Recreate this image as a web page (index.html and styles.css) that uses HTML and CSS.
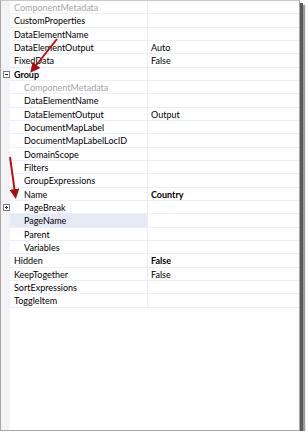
FILE: index.html
```html
<!DOCTYPE html>
<html lang="en">
<head>
  <meta charset="UTF-8" />
  <title>Properties</title>
  <link rel="stylesheet" href="styles.css">
</head>
<body>
  <div class="grid">
    <div class="row"><div class="name muted">ComponentMetadata</div><div class="value"></div></div>
    <div class="row"><div class="name">CustomProperties</div><div class="value"></div></div>
    <div class="row"><div class="name">DataElementName</div><div class="value"></div></div>
    <div class="row"><div class="name">DataElementOutput</div><div class="value">Auto</div></div>
    <div class="row"><div class="name">FixedData</div><div class="value">False</div></div>
    <div class="row"><span class="toggle minus"></span><div class="name bold">Group</div><div class="value"></div></div>
    <div class="row sub"><div class="name muted">ComponentMetadata</div><div class="value"></div></div>
    <div class="row sub"><div class="name">DataElementName</div><div class="value"></div></div>
    <div class="row sub"><div class="name">DataElementOutput</div><div class="value">Output</div></div>
    <div class="row sub"><div class="name">DocumentMapLabel</div><div class="value"></div></div>
    <div class="row sub"><div class="name">DocumentMapLabelLocID</div><div class="value"></div></div>
    <div class="row sub"><div class="name">DomainScope</div><div class="value"></div></div>
    <div class="row sub"><div class="name">Filters</div><div class="value"></div></div>
    <div class="row sub"><div class="name">GroupExpressions</div><div class="value"></div></div>
    <div class="row sub"><div class="name">Name</div><div class="value bold">Country</div></div>
    <div class="row sub"><span class="toggle plus"></span><div class="name">PageBreak</div><div class="value"></div></div>
    <div class="row sub selected"><div class="name">PageName</div><div class="value"></div></div>
    <div class="row sub"><div class="name">Parent</div><div class="value"></div></div>
    <div class="row sub"><div class="name">Variables</div><div class="value"></div></div>
    <div class="row"><div class="name">Hidden</div><div class="value bold">False</div></div>
    <div class="row"><div class="name">KeepTogether</div><div class="value">False</div></div>
    <div class="row"><div class="name">SortExpressions</div><div class="value"></div></div>
    <div class="row"><div class="name">ToggleItem</div><div class="value"></div></div>

    <!-- annotation arrows -->
    <svg class="arrows" width="300" height="220" viewBox="0 0 300 220">
      <defs>
        <marker id="head" markerWidth="5" markerHeight="5" refX="2" refY="2.5" orient="auto">
          <path d="M0,0 L5,2.5 L0,5 z" fill="#a80e0e"/>
        </marker>
      </defs>
      <line x1="56" y1="38" x2="33" y2="67" stroke="#b81414" stroke-width="2" marker-end="url(#head)"/>
      <line x1="9" y1="156" x2="14" y2="192" stroke="#b81414" stroke-width="2" marker-end="url(#head)"/>
    </svg>
  </div>
</body>
</html>
```
FILE: styles.css
```css
body {
  margin: 0;
  background: #fff;
  font-family: Lato, "Open Sans", sans-serif;
  font-size: 9px;
  color: #000;
}

.grid {
  position: relative;
  width: 300px;
  height: 431px;
  box-sizing: border-box;
  border: 1px solid #a8a8a8;
  border-top-color: #c8c8c8;
  box-shadow: 3px 3px 0 #5a5a5a, 5px 5px 1px #9a9a9a;
  padding-left: 9px;
  background-color: #fff;
  background-image: linear-gradient(#f3f3f6, #f3f3f6);
  background-size: 9px 100%;
  background-repeat: no-repeat;
}

.row {
  position: relative;
  display: flex;
  height: 13.33px;
  line-height: 13px;
  box-sizing: border-box;
  border-bottom: 1px solid #eceef8;
  background: #fff;
}

.name {
  width: 138px;
  box-sizing: border-box;
  padding-left: 4px;
  border-right: 1px solid #eceef8;
  white-space: nowrap;
  overflow: hidden;
}

.sub .name {
  padding-left: 14px;
}

.value {
  flex: 1;
  padding-left: 3px;
}

.muted {
  color: #a6a6a6;
}

.bold {
  font-weight: bold;
}

.selected .name {
  background: #e6e9f6;
}

.toggle {
  position: absolute;
  left: -7px;
  top: 3px;
  width: 7px;
  height: 7px;
  box-sizing: border-box;
  border: 1px solid #7a7a7a;
  background: #fff;
}

.toggle::before {
  content: "";
  position: absolute;
  left: 1px;
  top: 2px;
  width: 3px;
  height: 1px;
  background: #333;
}

.toggle.plus::after {
  content: "";
  position: absolute;
  left: 2px;
  top: 1px;
  width: 1px;
  height: 3px;
  background: #333;
}

.arrows {
  position: absolute;
  left: 0;
  top: 0;
  pointer-events: none;
}
```
